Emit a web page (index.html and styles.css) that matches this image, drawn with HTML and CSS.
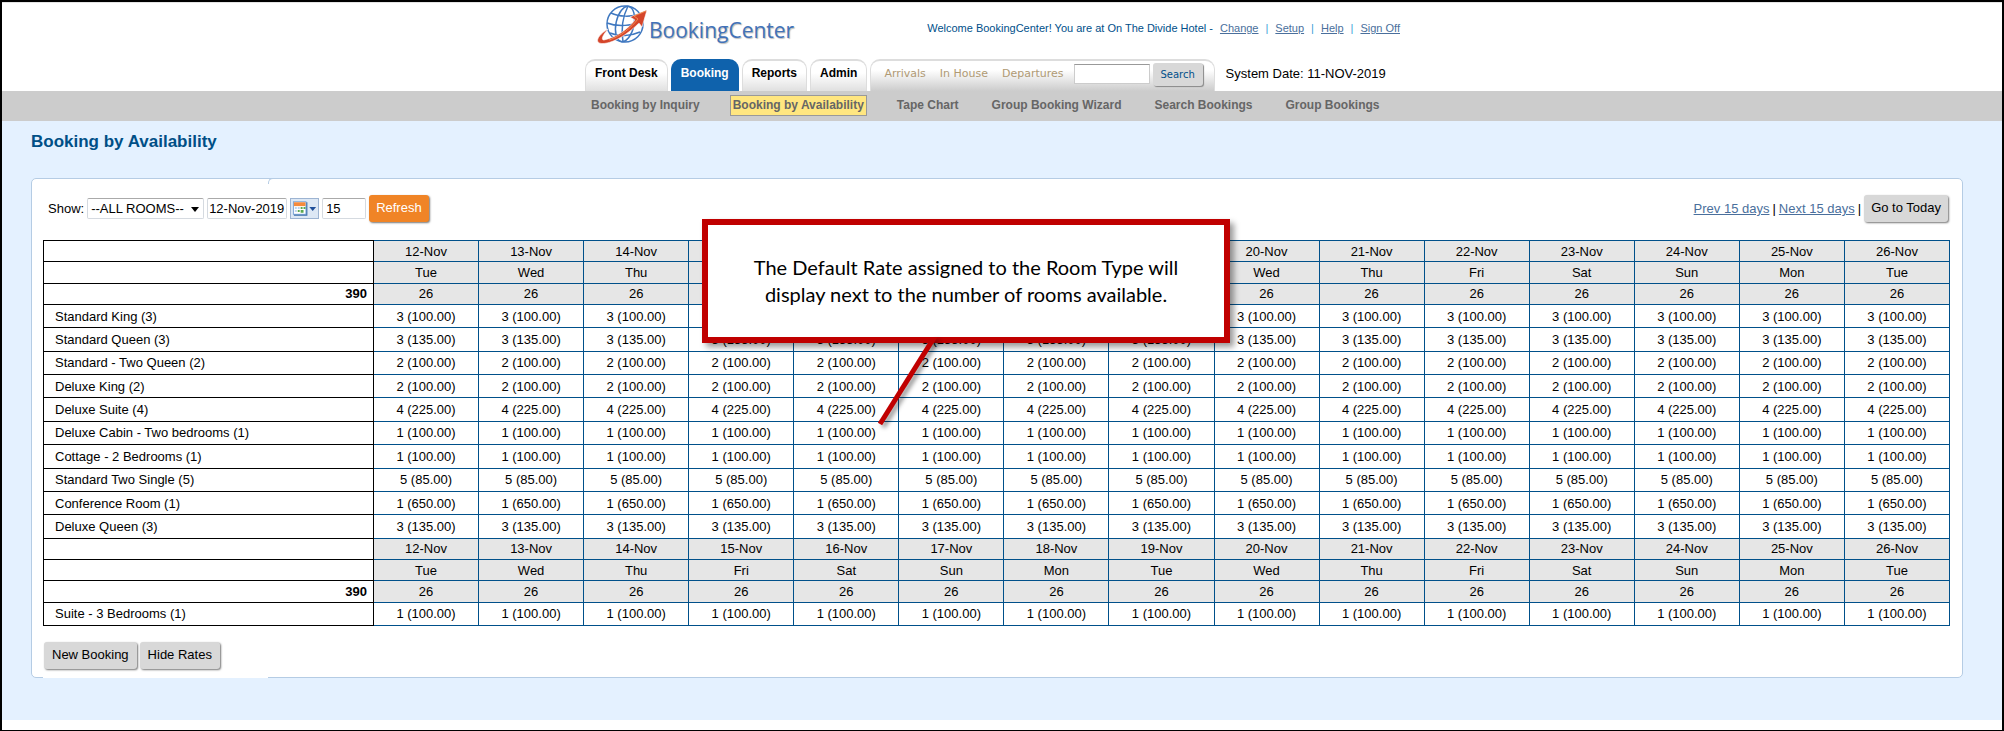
FILE: index.html
```
<!DOCTYPE html>
<html lang="en">
<head>
    <meta charset="UTF-8">
    <title>BookingCenter - Booking by Availability</title>
    <link rel="stylesheet" href="styles.css">
</head>
<body>
    <div class="page">
        <header class="header">
            <div class="header-inner">
                <div class="brand-row">
                    <div class="logo">
                        <svg class="logo-mark" viewBox="0 0 52 42" width="52" height="42" aria-hidden="true">
                            <g fill="none" stroke="#3f78c0" stroke-width="1.5">
                                <circle cx="28" cy="20" r="18"/>
                                <ellipse cx="28" cy="20" rx="9" ry="18" transform="rotate(12 28 20)"/>
                                <path d="M31 2C26 12 24 26 26 38"/>
                                <path d="M14 9C22 13 35 13 43 10"/>
                                <path d="M10 19C20 23 36 22 46 17"/>
                                <path d="M13 29C22 33 34 32 43 28"/>
                            </g>
                            <path d="M50 6L33 13L38 16C31 25 20 33 7 36C4 36 5 32 11 25C4 29 -1 35 1 38C4 42 22 39 42 19L45 23Z" fill="#d5452a" stroke="#fff" stroke-width="0.6"/>
                            <path d="M49 7L37 12L41 15C34 24 24 32 12 36" fill="none" stroke="#f08a50" stroke-width="1"/>
                        </svg>
                        <span class="logo-text">BookingCenter</span>
                    </div>
                    <div class="account">
                        <span>Welcome BookingCenter! You are at On The Divide Hotel -</span>
                        <a href="#">Change</a> <i>|</i>
                        <a href="#">Setup</a> <i>|</i>
                        <a href="#">Help</a> <i>|</i>
                        <a href="#">Sign Off</a>
                    </div>
                </div>
                <div class="tab-row">
                    <nav class="tabs">
                        <a class="tab" href="#">Front Desk</a>
                        <a class="tab active" href="#">Booking</a>
                        <a class="tab" href="#">Reports</a>
                        <a class="tab" href="#">Admin</a>
                    </nav>
                    <form class="quick">
                        <a href="#">Arrivals</a>
                        <a href="#">In House</a>
                        <a href="#">Departures</a>
                        <input class="quick-input" type="text" aria-label="Search">
                        <button class="quick-btn" type="button">Search</button>
                    </form>
                    <span class="system-date">System Date: 11-NOV-2019</span>
                </div>
            </div>
        </header>

        <nav class="subnav">
            <div class="subnav-inner">
                <a href="#">Booking by Inquiry</a>
                <a class="current" href="#">Booking by Availability</a>
                <a href="#">Tape Chart</a>
                <a href="#">Group Booking Wizard</a>
                <a href="#">Search Bookings</a>
                <a href="#">Group Bookings</a>
            </div>
        </nav>

        <main class="content">
            <h1>Booking by Availability</h1>
            <section class="panel">
                <div class="toolbar">
                    <form class="filters">
                        <label for="roomType">Show:</label>
                        <span class="select-wrap">
                            <select id="roomType" class="field room-type">
                                <option>--ALL ROOMS--</option>
                            </select>
                        </span>
                        <input class="field date" type="text" value="12-Nov-2019" aria-label="Start date">
                        <button class="calendar-btn" type="button" aria-label="Pick a date">
                            <svg viewBox="0 0 28 20" width="28" height="20" aria-hidden="true">
                                <rect x="3" y="3" width="14" height="14" fill="#3d6fa8"/>
                                <rect x="2" y="2" width="14" height="14" fill="#7aa3d4"/>
                                <rect x="3" y="3" width="12" height="12" fill="#fff"/>
                                <rect x="3" y="3" width="12" height="4" fill="#f58a3c"/>
                                <path d="M4 8h2v2H4zM7 8h2v2H7zM4 11h2v2H4z" fill="#bcd3ee"/>
                                <path d="M10 8h2v2h-2zM13 8h2v2h-2zM7 11h2v2H7zM10 11h3v3h-3z" fill="#5aa84f"/>
                                <path d="M19 8h7l-3.500 4z" fill="#1f4f9a"/>
                            </svg>
                        </button>
                        <input class="field days" type="text" value="15" aria-label="Number of days">
                        <button class="btn btn-primary" type="button">Refresh</button>
                    </form>
                    <div class="pager">
                        <a href="#">Prev 15 days</a> |
                        <a href="#">Next 15 days</a> |
                        <button class="btn" type="button">Go to Today</button>
                    </div>
                </div>

                <table class="grid">
                    <colgroup id="columns"><col class="col-name"></colgroup>
                    <tbody id="rows"></tbody>
                </table>

                <div class="actions">
                    <button class="btn" type="button">New Booking</button>
                    <button class="btn" type="button">Hide Rates</button>
                </div>

                <div class="callout">
                    <p>The Default Rate assigned to the Room Type will display next to the number of rooms available.</p>
                    <svg class="callout-line" viewBox="0 0 70 100" width="70" height="100" aria-hidden="true">
                        <path d="M65 -4L8 87" stroke="#c00000" stroke-width="5"/>
                    </svg>
                </div>
            </section>
        </main>
    </div>
    <script src="script.js"></script>
</body>
</html>
```
FILE: styles.css
```
* {
    box-sizing: border-box;
}
body {
    margin: 0;
    font-family: "Liberation Sans", Arial, sans-serif;
    font-size: 13px;
    color: #000;
    background: #fff;
}
.page {
    min-height: 100vh;
    border: 2px solid #000;
    padding-bottom: 10px;
}
a {
    color: #4a6f9c;
}

/* header */
.header-inner, .subnav-inner {
    width: 834px;
    margin: 0 auto;
    white-space: nowrap;
}
.header {
    border-top: 1px solid #e4e4e4;
}
.brand-row {
    display: flex;
    justify-content: space-between;
    height: 54px;
    padding: 1px 19px 0 12px;
}
.logo {
    display: flex;
}
.logo-text {
    padding-top: 10px;
    font-family: "Open Sans", sans-serif;
    font-size: 21px;
    line-height: 32px;
    color: #4272b8;
    text-shadow: 1px 1px 1px #bbb;
}
.account {
    display: flex;
    gap: 7px;
    padding-top: 18px;
    font-size: 11px;
    line-height: 13px;
    color: #004f8a;
}
.account i {
    font-style: normal;
    color: #3ea0d8;
}
.tab-row {
    display: flex;
    align-items: flex-end;
}
.tabs {
    display: flex;
    gap: 3px;
    margin-right: 3px;
}
.tab {
    height: 32px;
    padding: 0 9px;
    border: 1px solid #ddd;
    border-width: 2px 1px 0;
    border-radius: 10px 10px 0 0;
    background: linear-gradient(#fff 40%, #e0e0e0);
    font-size: 12px;
    font-weight: bold;
    line-height: 25px;
    color: #000;
    text-decoration: none;
}
.tab.active {
    border-color: #0f62ac;
    background: #0f62ac;
    color: #fff;
}
.quick {
    display: flex;
    height: 32px;
    padding: 2px 11px 0 13px;
    border: 1px solid #ddd;
    border-width: 2px 1px 0;
    border-radius: 10px 10px 0 0;
    background: linear-gradient(#fff 30%, #ccc);
    font-family: "DejaVu Sans", Verdana, sans-serif;
    font-size: 11px;
    line-height: 22px;
}
.quick a {
    margin-right: 14px;
    color: #b09a74;
    text-decoration: none;
}
.quick-input {
    width: 76px;
    height: 20px;
    margin: 1px 3px 0 -4px;
    border: 1px solid #ccc;
    border-top-color: #999;
}
.quick-btn {
    width: 50px;
    height: 23px;
    padding: 0;
    border: 0;
    border-radius: 3px;
    background: #d8d8d8;
    box-shadow: 1px 1px 1px #888;
    font-family: "DejaVu Sans", Verdana, sans-serif;
    font-size: 10px;
    color: #004f8a;
}
.system-date {
    margin-left: 11px;
    line-height: 34px;
}

/* sub navigation */
.subnav {
    background: #ccc;
}
.subnav-inner {
    display: flex;
    gap: 33px;
    height: 30px;
    padding: 4px 0 5px 6px;
}
.subnav a {
    font-size: 12px;
    font-weight: bold;
    line-height: 21px;
    color: #666;
    text-decoration: none;
}
.subnav .current {
    margin: 0 -3px;
    padding: 0 3px;
    background: #ffe680;
    outline: 1px solid #999;
    outline-offset: -1px;
}

/* content */
.content {
    padding: 10px 39px 42px 29px;
    background: #e4f1ff;
}
h1 {
    margin: 0 0 26px;
    font-size: 17px;
    line-height: 21px;
    color: #004f86;
}
.panel {
    position: relative;
    padding: 16px 12px 8px 11px;
    border: 1px solid #b5cce4;
    border-radius: 5px;
    background: #fff;
}
/* seam in the panel frame, above and below */
.panel::before {
    content: "";
    position: absolute;
    left: 236px;
    top: -1px;
    width: 5px;
    height: 5px;
    border: 1px solid #b5cce4;
    border-width: 1px 0 0 1px;
    border-radius: 5px 0 0 0;
}
.panel::after {
    content: "";
    position: absolute;
    left: 11px;
    bottom: -1px;
    width: 225px;
    height: 1px;
    background: #fff;
}
.toolbar {
    display: flex;
    justify-content: space-between;
    margin-bottom: 18px;
    padding: 0 2px 0 5px;
}
.filters, .pager {
    display: flex;
    align-items: center;
    gap: 3px;
}
.field {
    height: 21px;
    padding: 0 3px;
    border: 1px solid #d5dae0;
    border-top-color: #aaa;
    border-radius: 2px;
    background: #fff;
    font-family: inherit;
    font-size: 13px;
    color: #000;
}
.select-wrap {
    position: relative;
}
.select-wrap::after {
    content: "";
    position: absolute;
    right: 5px;
    top: 9px;
    border: 4px solid transparent;
    border-top: 5px solid #000;
    border-bottom: 0;
    pointer-events: none;
}
.room-type {
    width: 117px;
    appearance: none;
}
.date {
    width: 80px;
    padding: 0 1px;
}
.days {
    width: 44px;
}
.calendar-btn {
    display: flex;
    width: 29px;
    height: 21px;
    padding: 0;
    border: 1px solid #9db4d2;
    background: #dde8f5;
}
.btn {
    height: 27px;
    padding: 0 7px 2px;
    border: 0;
    border-radius: 3px;
    background: #d8d8d8;
    box-shadow: 1px 1px 2px #777;
    font-family: inherit;
    font-size: 13px;
    color: #000;
}
.btn-primary {
    background: #f08426;
    color: #fff;
}

/* availability grid */
.grid {
    width: 100%;
    height: 386px;
    border-collapse: collapse;
    table-layout: fixed;
    line-height: 15px;
    text-align: center;
}
.col-name {
    width: 330px;
}
.grid th, .grid td {
    padding: 0;
    border: 1px solid #00508a;
    font-weight: normal;
}
.grid th {
    padding-left: 11px;
    border-color: #000;
    text-align: left;
}
.grid .total {
    padding-right: 6px;
    font-weight: bold;
    text-align: right;
}
.head-row {
    height: 21px;
}
.head-row td {
    background: #e6e6e6;
}
.room-row {
    height: 23px;
}
.actions {
    display: flex;
    gap: 3px;
    margin: 16px 0 0 1px;
}
.actions .btn {
    padding: 0 8px 2px;
}

/* note over the grid */
.callout {
    position: absolute;
    left: 670px;
    top: 40px;
    width: 528px;
    padding: 29px 40px;
    border: 6px solid #c00000;
    background: #fff;
    box-shadow: 4px 4px 6px rgba(0,0,0,0.4);
    font-family: Lato, sans-serif;
    font-size: 20px;
    line-height: 27px;
    text-align: center;
}
.callout p {
    margin: 0;
}
.callout-line {
    position: absolute;
    left: 164px;
    top: 100%;
    filter: drop-shadow(3px 3px 2px rgba(0,0,0,0.4));
}
```
FILE: script.js
```
const days = ['Tue', 'Wed', 'Thu', 'Fri', 'Sat', 'Sun', 'Mon'];
const firstDay = 12;
const dayCount = 15;

const rooms = [
    ['Standard King', 3, '100.00'],
    ['Standard Queen', 3, '135.00'],
    ['Standard - Two Queen', 2, '100.00'],
    ['Deluxe King', 2, '100.00'],
    ['Deluxe Suite', 4, '225.00'],
    ['Deluxe Cabin - Two bedrooms', 1, '100.00'],
    ['Cottage - 2 Bedrooms', 1, '100.00'],
    ['Standard Two Single', 5, '85.00'],
    ['Conference Room', 1, '650.00'],
    ['Deluxe Queen', 3, '135.00'],
    ['Suite - 3 Bedrooms', 1, '100.00']
];

const table = document.getElementById('rows');

function addRow(rowClass, title, titleClass, cellText) {
    const row = table.insertRow();
    row.className = rowClass;
    const head = document.createElement('th');
    head.className = titleClass;
    head.textContent = title;
    row.appendChild(head);
    for (let i = 0; i < dayCount; i++) {
        row.insertCell().textContent = cellText(i);
    }
}

function addHeader() {
    addRow('head-row', '', '', i => `${firstDay + i}-Nov`);
    addRow('head-row', '', '', i => days[i % 7]);
    addRow('head-row', '390', 'total', () => '26');
}

for (let i = 0; i < dayCount; i++) {
    document.getElementById('columns').appendChild(document.createElement('col'));
}

rooms.forEach(([name, free, rate], index) => {
    // header repeats after every ten rooms
    if (index % 10 === 0) addHeader();
    addRow('room-row', `${name} (${free})`, '', () => `${free} (${rate})`);
});
```
